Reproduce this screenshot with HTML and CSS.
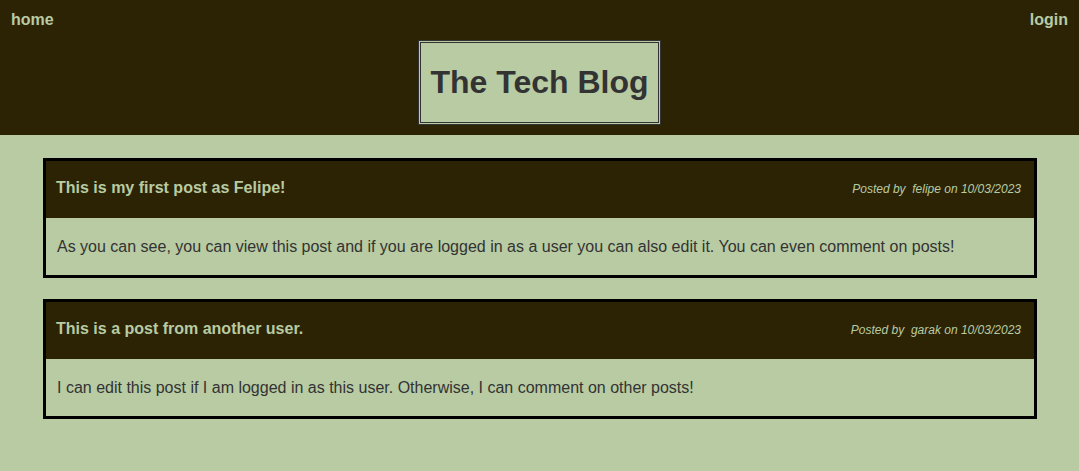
FILE: index.html
```html
<!DOCTYPE html>
<html lang="en">
<head>
<meta charset="utf-8">
<title>The Tech Blog</title>
<link rel="stylesheet" href="styles.css">
</head>
<body>
<header class="site-header">
  <nav class="nav">
    <a class="nav-link" href="#">home</a>
    <a class="nav-link" href="#">login</a>
  </nav>
  <div class="brand-wrap">
    <h1 class="brand">The Tech Blog</h1>
  </div>
</header>
<main class="posts">
  <article class="post">
    <div class="post-head">
      <h2 class="post-title">This is my first post as Felipe!</h2>
      <p class="post-meta">Posted by&nbsp; felipe on 10/03/2023</p>
    </div>
    <div class="post-body">As you can see, you can view this post and if you are logged in as a user you can also edit it. You can even comment on posts!</div>
  </article>
  <article class="post">
    <div class="post-head">
      <h2 class="post-title">This is a post from another user.</h2>
      <p class="post-meta">Posted by&nbsp; garak on 10/03/2023</p>
    </div>
    <div class="post-body">I can edit this post if I am logged in as this user. Otherwise, I can comment on other posts!</div>
  </article>
</main>
</body>
</html>
```
FILE: styles.css
```css
* { box-sizing: border-box; }
html, body {
  margin: 0;
  padding: 0;
  background: #b8cba3;
  font-family: "Liberation Sans", Arial, Helvetica, sans-serif;
  color: #333333;
}
.site-header {
  background: #2c2304;
  padding: 11px 11px 10px;
}
.nav {
  display: flex;
  justify-content: space-between;
  line-height: 18px;
}
.nav-link {
  color: #b8cba3;
  font-weight: bold;
  font-size: 16px;
  text-decoration: none;
}
.brand-wrap {
  display: flex;
  justify-content: center;
  margin-top: 11px;
}
.brand {
  margin: 0;
  background: #b8cba3;
  border: 3px double #333333;
  color: #333333;
  font-size: 32px;
  line-height: 39px;
  font-weight: bold;
  padding: 20px 9px 20px;
}
.posts {
  display: flex;
  flex-direction: column;
  gap: 21px;
  padding: 23px 42px 40px 43px;
}
.post {
  border: 3px solid #000000;
}
.post-head {
  background: #2c2304;
  display: flex;
  justify-content: space-between;
  align-items: baseline;
  padding: 18px 13px 21px 10px;
}
.post-title {
  margin: 0;
  font-size: 16px;
  line-height: 18px;
  font-weight: bold;
  color: #b8cba3;
}
.post-meta {
  margin: 0;
  font-size: 12px;
  font-style: italic;
  color: #b8cba3;
}
.post-body {
  padding: 20px 11px 19px;
  font-size: 16px;
  line-height: 18px;
  color: #333333;
}
```
